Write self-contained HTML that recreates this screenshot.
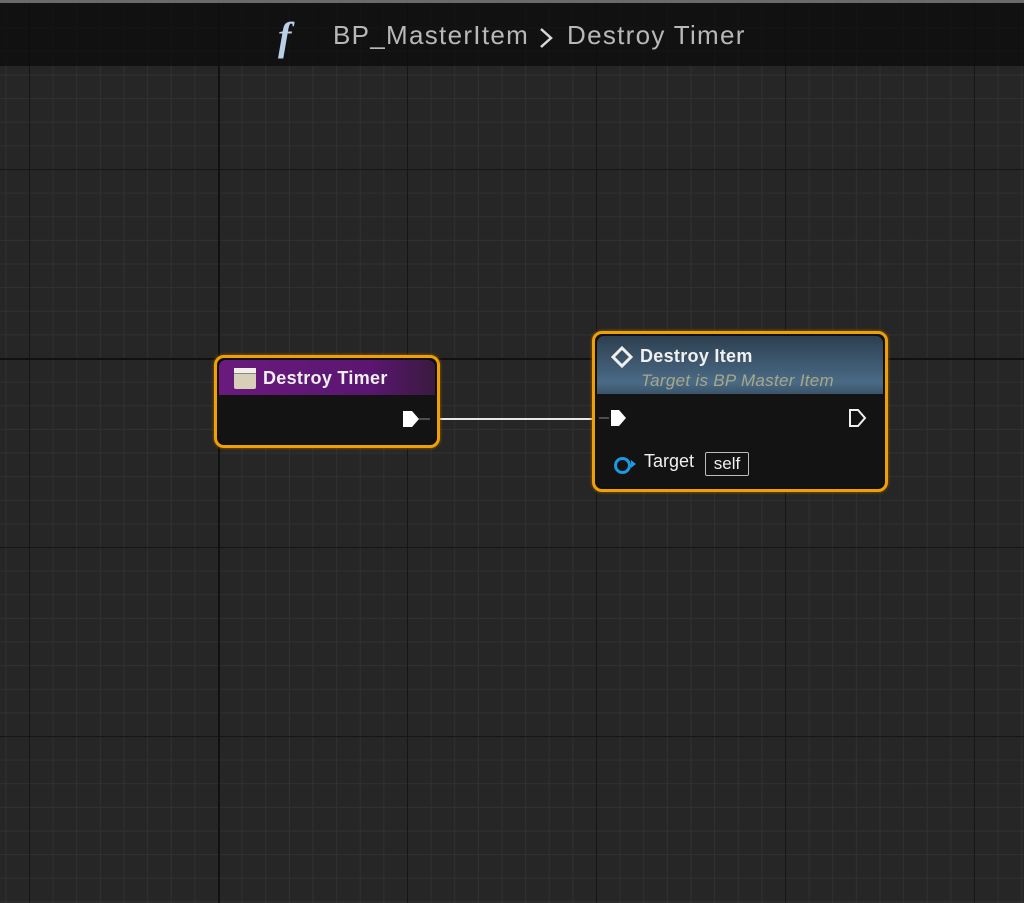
<!DOCTYPE html>
<html><head><style>
html,body{margin:0;padding:0;}
body{width:1024px;height:903px;overflow:hidden;position:relative;font-family:"Liberation Sans","DejaVu Sans",sans-serif;
background-color:#262626;
background-image:
linear-gradient(to right,#161616 0,#161616 1px,transparent 1px),
linear-gradient(to bottom,#161616 0,#161616 1px,transparent 1px),
linear-gradient(to right,#313131 0,#313131 1px,transparent 1px),
linear-gradient(to bottom,#313131 0,#313131 1px,transparent 1px);
background-size:189px 189px,189px 189px,23.625px 23.625px,23.625px 23.625px;
background-position:218px 0,0 169px,218px 0,0 169px;}
.top{position:absolute;left:0;top:0;width:1024px;height:66px;background:rgba(10,10,10,0.72);border-top:3px solid #6a6a6a;box-sizing:border-box;}
.crumb{position:absolute;top:17px;font-size:26px;letter-spacing:1.3px;color:#b8b8b8;}
.node{position:absolute;border:3px solid #f0a000;border-radius:10px;background:#0f100f;box-shadow:0 0 3px #a06000;box-sizing:border-box;overflow:hidden;}
.inner{position:absolute;inset:2px;border-radius:7px;overflow:hidden;background:#121312;}
.t{color:#f0f0f0;font-weight:bold;font-size:18px;position:absolute;letter-spacing:0.3px;}
</style></head><body>
<div class="top">
<div style="position:absolute;left:278px;top:10px;font-family:'Liberation Serif',serif;font-style:italic;font-weight:bold;font-size:40px;color:#b8cfe6;">f</div>
<div class="crumb" style="left:333px">BP_MasterItem</div>
<svg style="position:absolute;left:537px;top:24px" width="18" height="22"><path d="M4 2 L14 11 L4 20" stroke="#d8d8d8" stroke-width="2.5" fill="none"/></svg>
<div class="crumb" style="left:567px">Destroy Timer</div>
</div>
<div style="position:absolute;left:218px;top:66px;width:1.5px;height:837px;background:#111"></div>
<div style="position:absolute;left:0;top:358px;width:1024px;height:1.5px;background:#111"></div>

<div style="position:absolute;left:437px;top:418px;width:178px;height:2px;background:#e8e8e8"></div>

<div class="node" style="left:214px;top:355px;width:226px;height:93px;">
<div class="inner">
<div style="position:absolute;left:0;top:0;right:0;height:35px;background:linear-gradient(to right,#6a1a7e,#5a1670 70%,#3a1a40);"></div>
<div style="position:absolute;left:15px;top:8px;width:22px;height:21px;background:#d8cfb8;border-radius:2px;"><div style="height:5px;background:#f2efe6;border-bottom:1px solid #888"></div></div>
<div class="t" style="left:44px;top:8px;">Destroy Timer</div>
<svg style="position:absolute;left:183px;top:50px" width="30" height="20"><path d="M1 1 H10 L17 9 L10 17 H1 Z" fill="#fff"/><path d="M17 9 H28" stroke="#888" stroke-width="1"/></svg>
</div></div>

<div class="node" style="left:592px;top:331px;width:296px;height:161px;">
<div class="inner">
<div style="position:absolute;left:0;top:0;right:0;height:58px;background:linear-gradient(to bottom,#2d3f50,#4a6a86 80%,#3a5468);"></div>
<svg style="position:absolute;left:13px;top:10px" width="24" height="24"><path d="M12 2 L21 11 L12 20 L3 11 Z" fill="none" stroke="#f0f0f0" stroke-width="3"/></svg>
<div class="t" style="left:43px;top:10px;">Destroy Item</div>
<div style="position:absolute;left:44px;top:35px;font-size:17px;letter-spacing:0.3px;font-style:italic;color:#a8a888;">Target is BP Master Item</div>
<svg style="position:absolute;left:2px;top:72px" width="30" height="22"><path d="M0 10 H10" stroke="#888"/><path d="M12 2 H20 L27 10 L20 18 H12 Z" fill="#fff"/></svg>
<svg style="position:absolute;left:250px;top:72px" width="22" height="22"><path d="M3 2 H11 L18 10 L11 18 H3 Z" fill="none" stroke="#f0f0f0" stroke-width="2"/></svg>
<div style="position:absolute;left:17px;top:121px;width:11px;height:11px;border:3px solid #1a9ae0;border-radius:50%;"></div>
<div style="position:absolute;left:34px;top:124px;width:0;height:0;border-left:5px solid #1a9ae0;border-top:4px solid transparent;border-bottom:4px solid transparent;"></div>
<div style="position:absolute;left:47px;top:115px;font-size:18px;color:#f0f0f0;">Target</div>
<div style="position:absolute;left:108px;top:116px;width:44px;height:24px;border:1px solid #bbb;border-radius:2px;box-sizing:border-box;font-size:17px;color:#f0f0f0;text-align:center;line-height:22px;">self</div>
</div></div>
</body></html>
